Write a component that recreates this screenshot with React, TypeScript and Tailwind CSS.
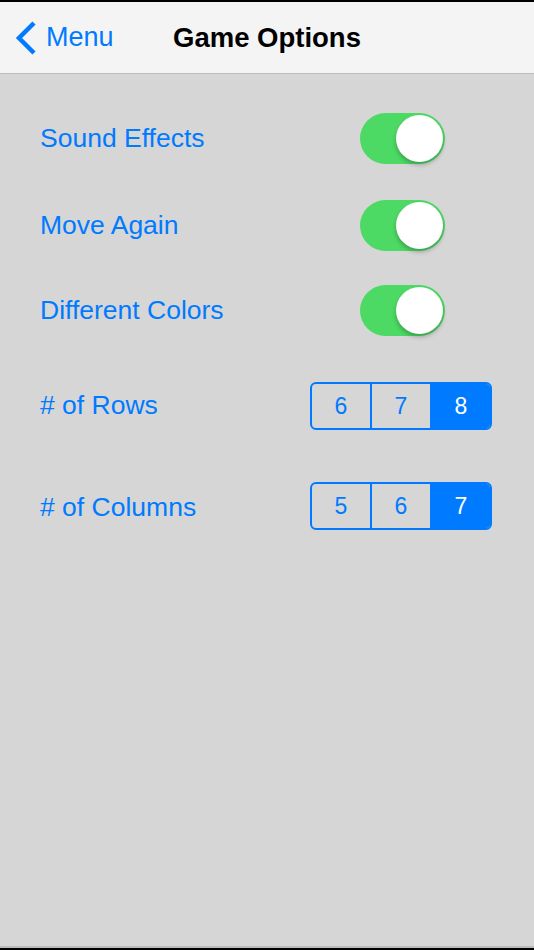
import React, { useState } from 'react';

const font = { fontFamily: '"Liberation Sans", Arial, sans-serif' };

const Toggle = ({ on }: { on: boolean }) => (
  <div
    className={`relative w-[85px] h-[51px] rounded-full ${on ? 'bg-[#4cd964]' : 'bg-[#e5e5e5]'}`}
  >
    <div
      className={`absolute top-[2px] w-[47px] h-[47px] rounded-full bg-white shadow-[0_3px_4px_rgba(0,0,0,0.25)] ${
        on ? 'right-[2px]' : 'left-[2px]'
      }`}
    />
  </div>
);

const Segmented = ({ items, selected }: { items: number[]; selected: number }) => (
  <div className="flex w-[182px] h-[48px] rounded-[6px] border-2 border-[#007aff] overflow-hidden">
    {items.map((n, i) => (
      <div
        key={n}
        className={`flex-1 flex items-center justify-center text-[23px] ${
          i > 0 ? 'border-l-2 border-[#007aff]' : ''
        } ${n === selected ? 'bg-[#007aff] text-white' : 'text-[#007aff]'}`}
      >
        {n}
      </div>
    ))}
  </div>
);

export default function App() {
  const [sound] = useState(true);
  const [again] = useState(true);
  const [colors] = useState(true);

  return (
    <div className="w-[534px] h-[950px] bg-black flex flex-col" style={font}>
      <div className="mt-[2px] h-[72px] bg-[#f4f4f4] border-b border-[#bdbdbd] flex items-center relative">
        <div className="flex items-center pl-[14px] text-[#007aff]">
          <svg width="24" height="34" viewBox="0 0 24 34" className="mr-[8px]">
            <path d="M20 2 L5 17 L20 32" fill="none" stroke="#007aff" strokeWidth="4.5" />
          </svg>
          <span className="text-[27px]">Menu</span>
        </div>
        <span className="absolute left-[173px] text-[27.5px] font-bold text-black">Game Options</span>
      </div>
      <div className="flex-1 bg-[#d6d6d6] border-b-[2px] border-[#bcbcbc] mb-[2px]">
        <div className="pl-[40px] pr-[42px] pt-[39px] text-[#007aff] text-[26.5px]">
          <div className="flex items-center justify-between pr-[47px] h-[51px]">
            <span>Sound Effects</span>
            <Toggle on={sound} />
          </div>
          <div className="flex items-center justify-between pr-[47px] h-[51px] mt-[36px]">
            <span>Move Again</span>
            <Toggle on={again} />
          </div>
          <div className="flex items-center justify-between pr-[47px] h-[51px] mt-[34px]">
            <span>Different Colors</span>
            <Toggle on={colors} />
          </div>
          <div className="flex items-center justify-between h-[48px] mt-[46px]">
            <span>#&nbsp;of Rows</span>
            <Segmented items={[6, 7, 8]} selected={8} />
          </div>
          <div className="flex items-center justify-between h-[48px] mt-[52px]">
            <span className="pt-[3px]">#&nbsp;of Columns</span>
            <Segmented items={[5, 6, 7]} selected={7} />
          </div>
        </div>
      </div>
    </div>
  );
}
